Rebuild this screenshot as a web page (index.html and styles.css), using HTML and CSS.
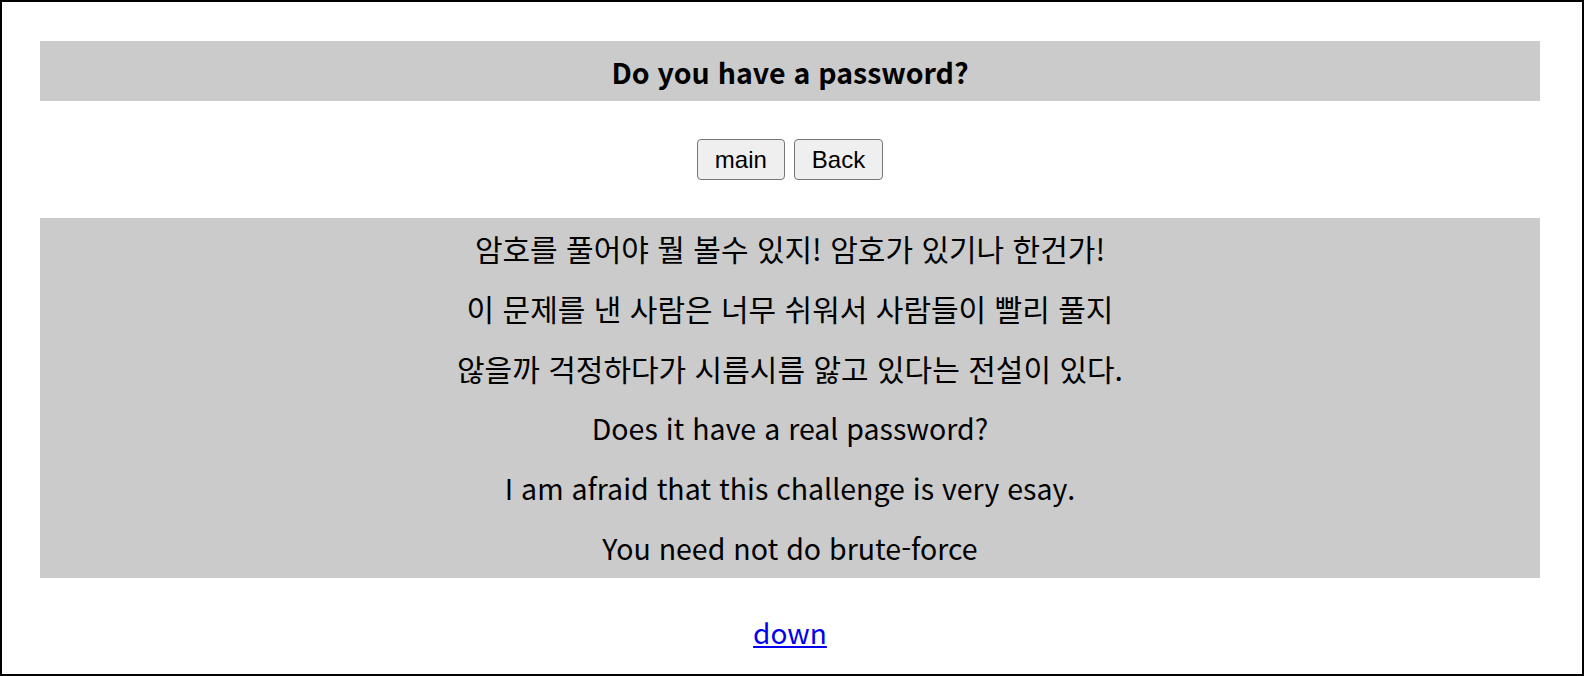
FILE: index.html
```html
<!DOCTYPE html>
<html lang="ko">
<head>
<meta charset="utf-8">
<title>Do you have a password?</title>
<link rel="stylesheet" href="styles.css">
</head>
<body>
<div class="frame">
  <div class="title">Do you have a password?</div>
  <div class="buttons">
    <button class="btn" type="button">main</button>
    <button class="btn" type="button">Back</button>
  </div>
  <div class="message">
    <p class="ko">암호를 풀어야 뭘 볼수 있지! 암호가 있기나 한건가!</p>
    <p class="ko">이 문제를 낸 사람은 너무 쉬워서 사람들이 빨리 풀지</p>
    <p class="ko">않을까 걱정하다가 시름시름 앓고 있다는 전설이 있다.</p>
    <p>Does it have a real password?</p>
    <p>I am afraid that this challenge is very esay.</p>
    <p>You need not do brute-force</p>
  </div>
  <div class="footer"><a href="#" class="down">down</a></div>
</div>
</body>
</html>
```
FILE: styles.css
```css
html, body {
  margin: 0;
  padding: 0;
  background: #fff;
}
.frame {
  box-sizing: border-box;
  width: 1584px;
  height: 676px;
  border: 2px solid #000;
  padding: 39px 42px 0 38px;
  font-family: "Noto Sans CJK KR", "Noto Sans", sans-serif;
  color: #000;
}
.title {
  background: #cbcbcb;
  height: 60px;
  display: flex;
  align-items: center;
  justify-content: center;
  font-size: 28.5px;
  font-weight: bold;
}
.buttons {
  display: flex;
  justify-content: center;
  gap: 9px;
  margin-top: 38px;
}
.btn {
  font-family: "Liberation Sans", Arial, sans-serif;
  font-size: 24px;
  height: 41px;
  padding: 0 17px;
  background: #efefef;
  border: 1px solid #767676;
  border-radius: 4px;
  color: #000;
}
.message {
  background: #cbcbcb;
  margin-top: 38px;
  text-align: center;
  font-size: 28.5px;
}
.message p {
  margin: 0;
  height: 60px;
  line-height: 60px;
}
.message .ko {
  font-size: 30px;
}
.footer {
  text-align: center;
  margin-top: 34px;
  font-size: 28px;
}
.down {
  color: #0000ee;
  text-decoration: underline;
}
```
